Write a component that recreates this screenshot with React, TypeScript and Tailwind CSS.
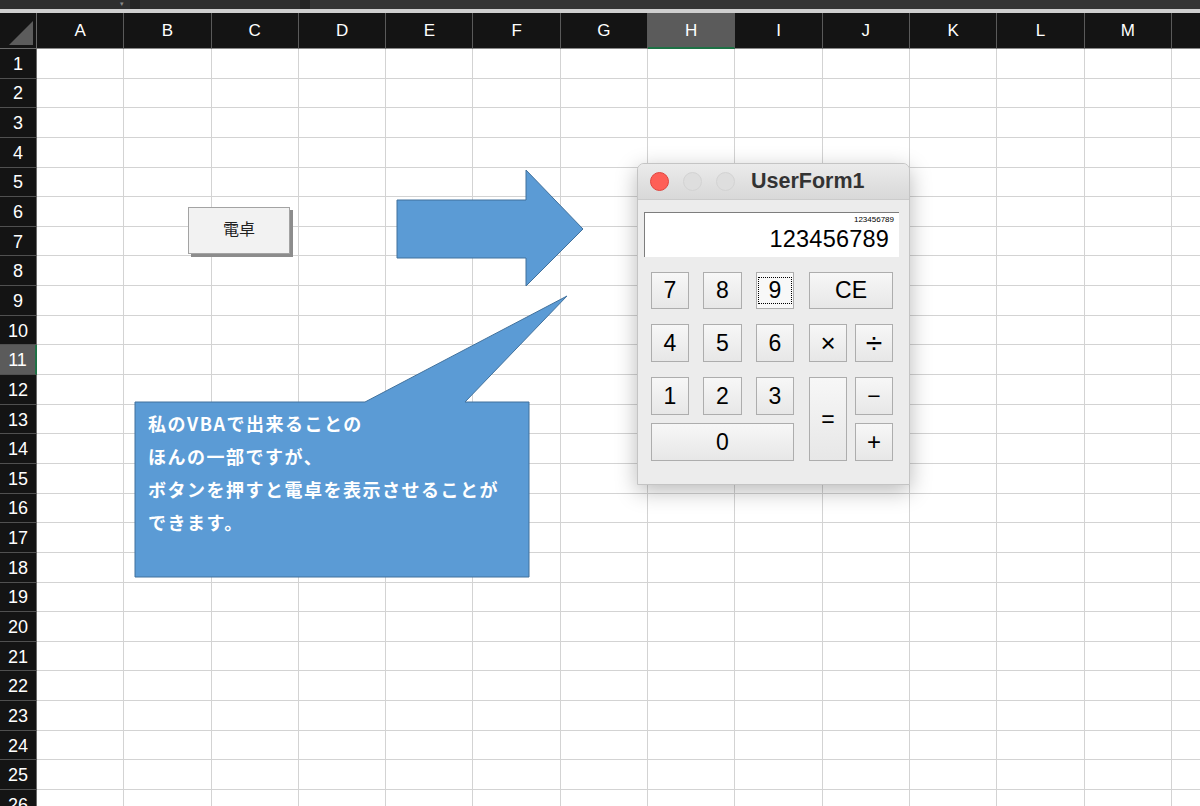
import React from 'react';

const COLS = ['A', 'B', 'C', 'D', 'E', 'F', 'G', 'H', 'I', 'J', 'K', 'L', 'M', ''];
const ROWS = Array.from({ length: 27 }, (_, i) => i + 1);

const SHEET_FONT = "font-['Liberation_Sans','Noto_Sans_CJK_JP',sans-serif]";
const JP_FONT = "font-['Noto_Sans_CJK_JP',sans-serif]";

function CalcKey({ label, className = '', focused = false }: { label: string; className?: string; focused?: boolean }) {
  return (
    <button
      className={`flex items-center justify-center border-[1.5px] border-[#adadad] text-[23px] leading-none text-black ${
        focused ? 'bg-[#f8f8f8]' : 'bg-linear-to-b from-[#f7f7f7] to-[#e7e7e7]'
      } ${className}`}
    >
      {focused ? (
        <span className="flex h-[27px] w-[34px] items-center justify-center border border-dotted border-black">{label}</span>
      ) : (
        label
      )}
    </button>
  );
}

function Calculator() {
  return (
    <div className="absolute left-[637px] top-[163px] flex h-[322px] w-[273px] flex-col overflow-hidden rounded-t-[7px] border border-[#c4c4c4] bg-[#ececec] shadow-[0_6px_22px_rgba(0,0,0,0.28)]">
      {/* title bar */}
      <div className="relative flex h-[36px] items-center border-b border-[#cbcbcb] bg-linear-to-b from-[#ebebeb] to-[#d8d8d8] px-[12px]">
        <div className="flex gap-[14px]">
          <span className="h-[19px] w-[19px] rounded-full border border-[#e0443e] bg-[#fe5f57]" />
          <span className="h-[19px] w-[19px] rounded-full border border-[#d3d3d3] bg-[#dedede]" />
          <span className="h-[19px] w-[19px] rounded-full border border-[#d3d3d3] bg-[#dedede]" />
        </div>
        <span className="ml-[16px] text-[21.5px] font-bold text-[#333] font-['Liberation_Sans',sans-serif]">UserForm1</span>
      </div>

      <div className="flex flex-col px-[6px] pt-[12px]">
        {/* display */}
        <div className="flex h-[45px] w-[255px] flex-col items-end border-l border-t border-[#7d7d7d] bg-white font-['Liberation_Sans',sans-serif] text-black">
          <span className="mr-[5px] mt-[2px] text-[8px] leading-[10px]">123456789</span>
          <span className="mr-[10px] mt-[1px] text-[23.5px] leading-[26px] tracking-[0.2px]">123456789</span>
        </div>

        {/* keypad */}
        <div className="ml-[7px] mt-[15px] grid grid-cols-[38px_14px_39px_14px_38px_15px_38px_8px_38px] grid-rows-[37px_15px_38px_15px_38px_8px_38px] font-['Liberation_Sans',sans-serif]">
          <CalcKey label="7" className="col-start-1 row-start-1" />
          <CalcKey label="8" className="col-start-3 row-start-1" />
          <CalcKey label="9" className="col-start-5 row-start-1" focused />
          <CalcKey label="CE" className="col-start-7 col-span-3 row-start-1" />

          <CalcKey label="4" className="col-start-1 row-start-3" />
          <CalcKey label="5" className="col-start-3 row-start-3" />
          <CalcKey label="6" className="col-start-5 row-start-3" />
          <CalcKey label="×" className="col-start-7 row-start-3 text-[26px]" />
          <CalcKey label="÷" className="col-start-9 row-start-3 text-[30px]" />

          <CalcKey label="1" className="col-start-1 row-start-5" />
          <CalcKey label="2" className="col-start-3 row-start-5" />
          <CalcKey label="3" className="col-start-5 row-start-5" />
          <CalcKey label="=" className="col-start-7 row-start-5 row-span-3" />
          <CalcKey label="−" className="col-start-9 row-start-5 text-[20px]" />

          <CalcKey label="0" className="col-start-1 col-span-5 row-start-7" />
          <CalcKey label="+" className="col-start-9 row-start-7 text-[24px]" />
        </div>
      </div>
    </div>
  );
}

export default function App() {
  return (
    <div className={`relative h-[806px] w-[1200px] overflow-hidden bg-white ${SHEET_FONT}`}>
      {/* toolbar strip */}
      <div className="flex h-[9px] items-end gap-[10px] bg-[#252525]">
        <div className="flex h-[9px] w-[130px] items-start justify-end bg-[#2f2f2f] pr-[6px]">
          <span className="text-[7px] leading-none text-[#8a8a8a]">▾</span>
        </div>
        <div className="h-[9px] w-[160px] bg-[#2f2f2f]" />
        <div className="h-[9px] flex-1 bg-[#353535]" />
      </div>
      <div className="h-[4px] bg-[#cfcfcf]" />

      {/* sheet grid */}
      <div className="grid grid-cols-[37px_repeat(14,87.3px)] grid-rows-[36px_repeat(27,29.65px)]">
        <div className="relative border-b border-r border-[#6a6a6a] bg-[#141414]">
          <span className="absolute bottom-[3px] right-[3px] h-0 w-0 border-b-[24px] border-l-[24px] border-b-[#5c5c5c] border-l-transparent" />
        </div>
        {COLS.map((c, i) => (
          <div
            key={i}
            className={`flex items-center justify-center border-r-[1.5px] pt-[1px] text-[17px] text-white ${
              c === 'H'
                ? 'border-b-2 border-r-[#5a5a5a] border-b-[#1e7145] bg-[#5b5b5b]'
                : 'border-b border-r-[#5a5a5a] border-b-[#8a8a8a] bg-[#141414]'
            }`}
          >
            {c}
          </div>
        ))}

        {ROWS.map((r) => (
          <React.Fragment key={r}>
            <div
              className={`flex items-center justify-center border-b-[1.5px] border-b-[#505050] pt-[2px] text-[18px] text-white ${
                r === 11 ? 'border-r-2 border-r-[#1e7145] bg-[#5b5b5b]' : 'border-r border-r-[#6a6a6a] bg-[#141414]'
              }`}
            >
              {r}
            </div>
            {COLS.map((c, i) => (
              <div key={i} className="border-b-[1.5px] border-r-[1.5px] border-[#d3d3d3]" />
            ))}
          </React.Fragment>
        ))}
      </div>

      {/* form button on the sheet */}
      <div className={`absolute left-[188px] top-[207px] flex h-[47px] w-[102px] items-start justify-center border border-[#a3a3a3] bg-[#f2f2f2] pt-[8px] text-[16px] text-[#222] shadow-[3px_3px_0_#8c8c8c] ${JP_FONT}`}>
        電卓
      </div>

      {/* block arrow and callout shapes */}
      <svg className="absolute left-0 top-0" width="1200" height="806" viewBox="0 0 1200 806">
        <polygon
          points="397,200 526,200 526,170 583,229 526,286 526,258 397,258"
          fill="#5b9bd5"
          stroke="#41719c"
          strokeWidth="1"
        />
        <path
          d="M135,402 L365,402 L567,296 L465,402 L529,402 L529,577 L135,577 Z"
          fill="#5b9bd5"
          stroke="#41719c"
          strokeWidth="1"
        />
      </svg>

      {/* callout text */}
      <div className={`absolute left-[135px] top-[402px] w-[394px] pl-[13px] pt-[5px] text-[18px] font-bold leading-[33px] tracking-[1.5px] text-white ${JP_FONT}`}>
        <p>私のVBAで出来ることの</p>
        <p>ほんの一部ですが、</p>
        <p>ボタンを押すと電卓を表示させることが</p>
        <p>できます。</p>
      </div>

      <Calculator />
    </div>
  );
}
